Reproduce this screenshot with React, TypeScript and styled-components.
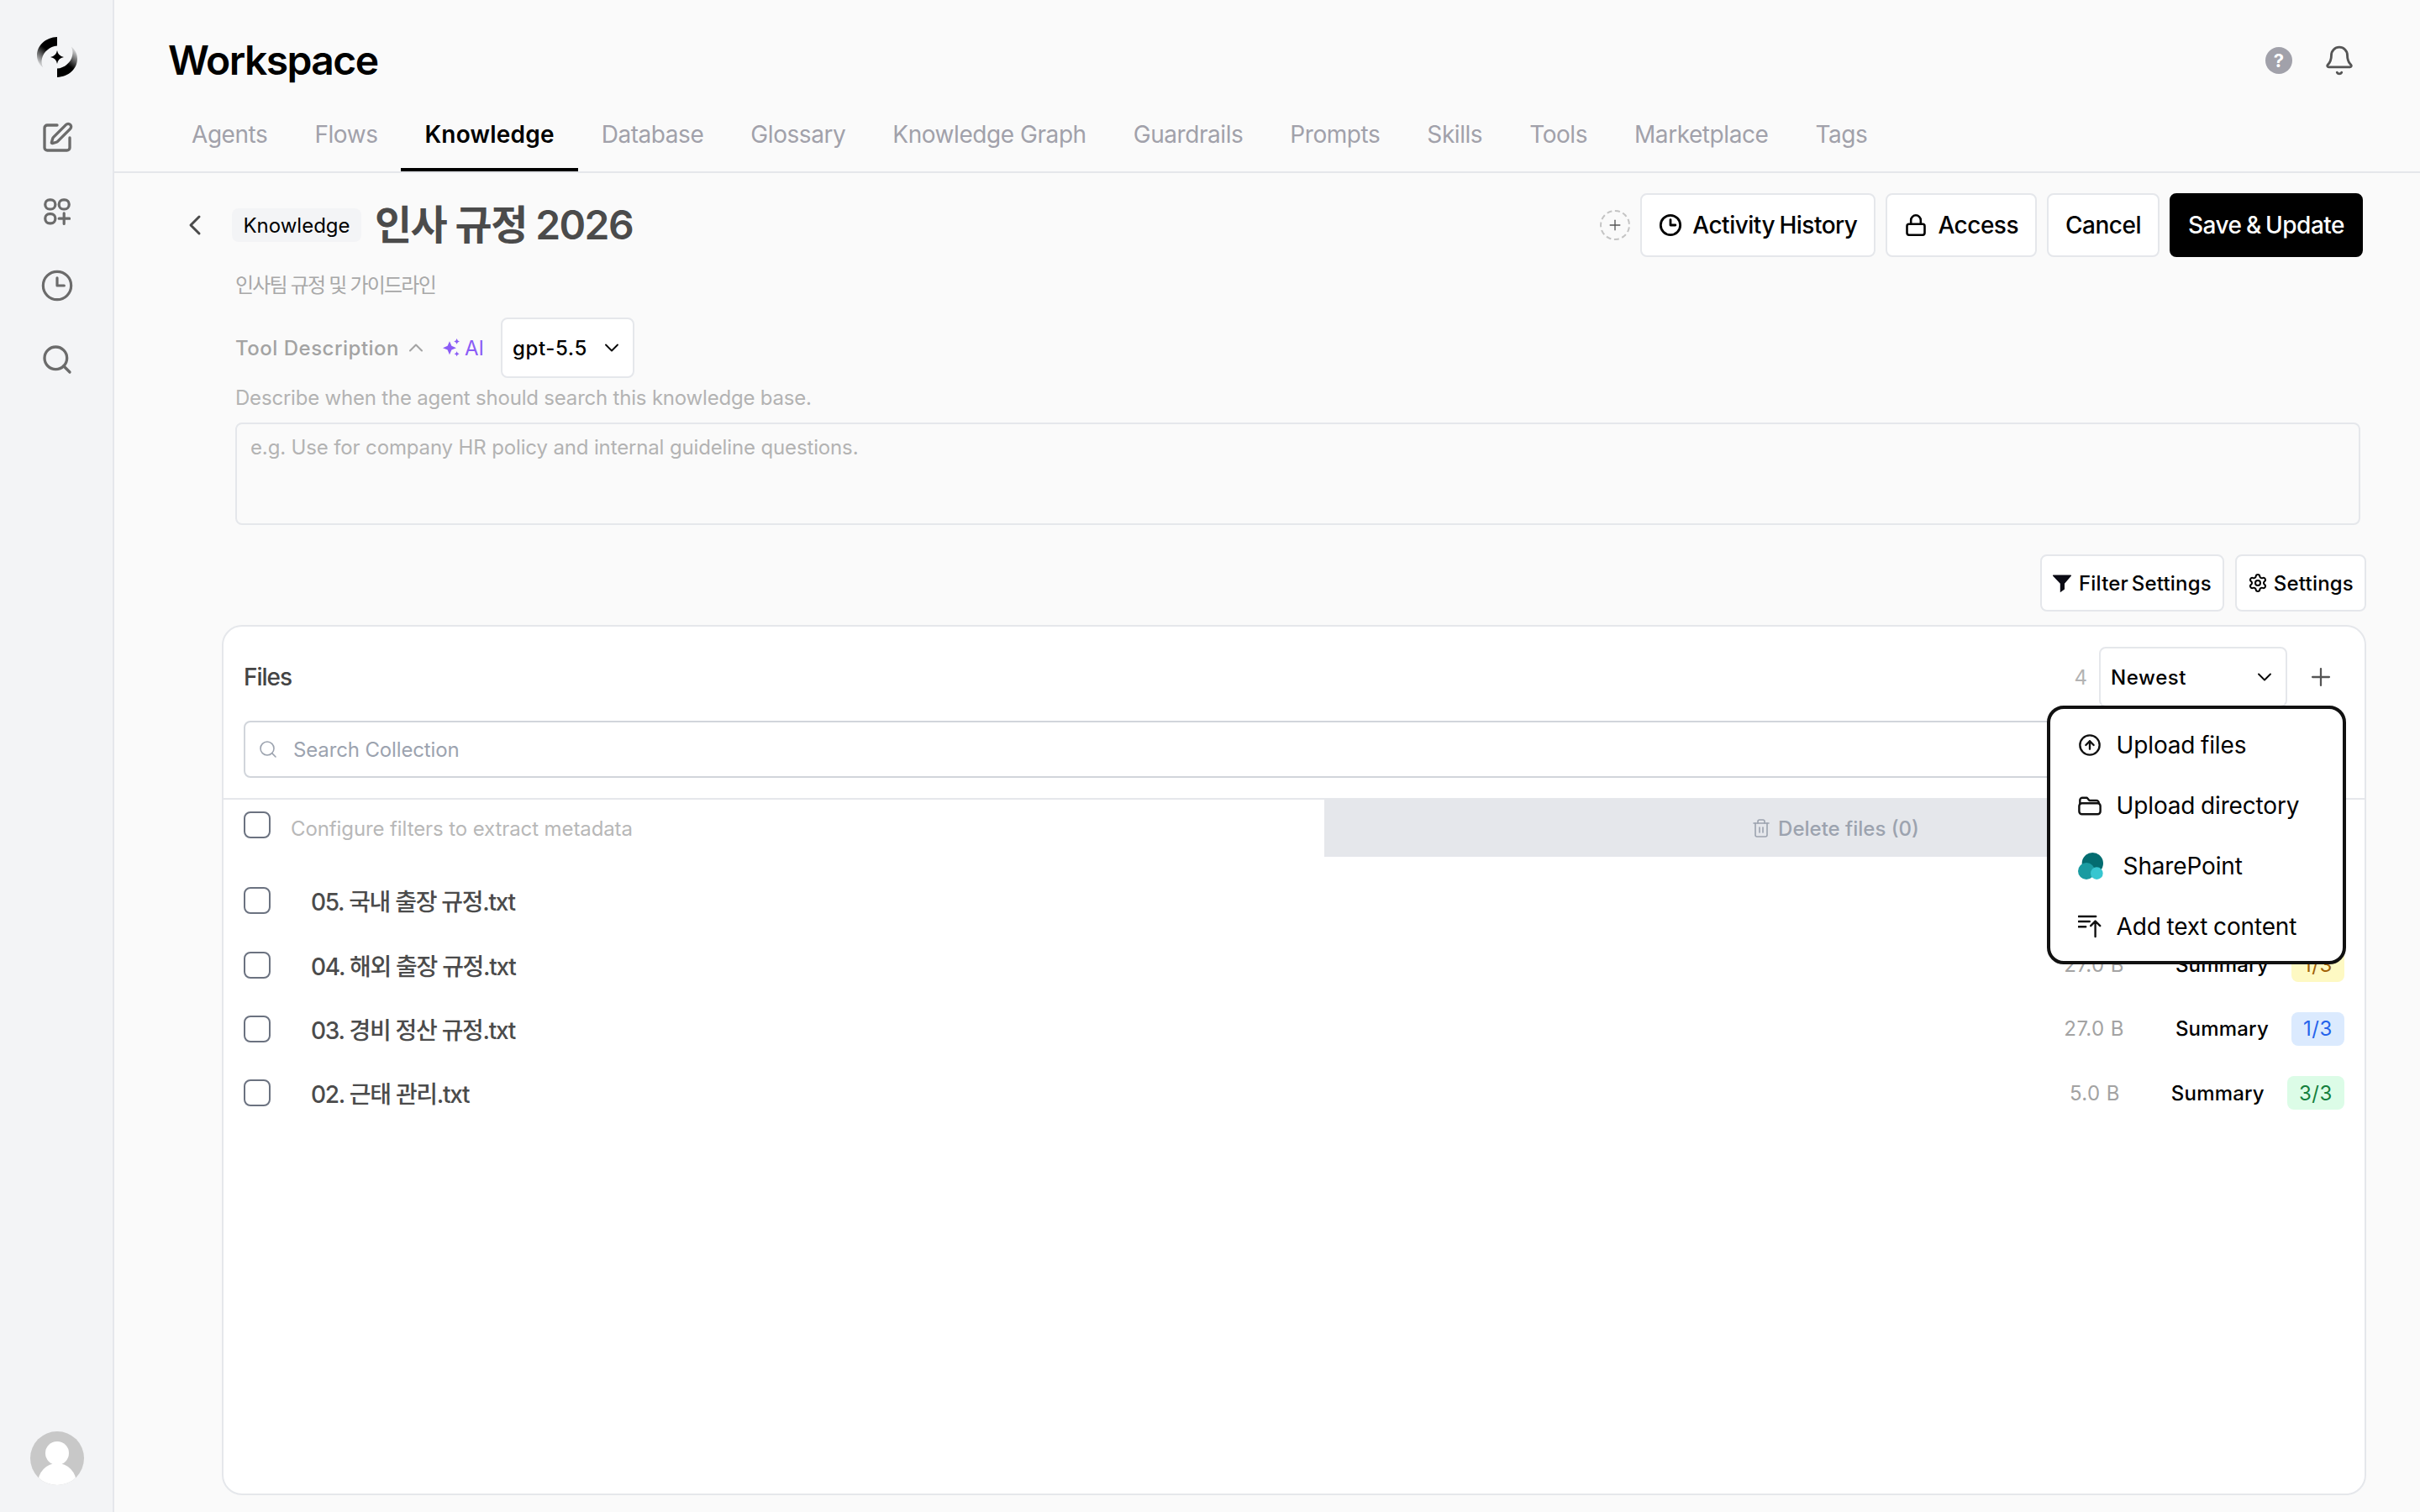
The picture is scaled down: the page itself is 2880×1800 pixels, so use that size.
import React from "react";
import styled, { createGlobalStyle } from "styled-components";
import {
  SquarePen,
  Search,
  ChevronLeft,
  ChevronUp,
  ChevronDown,
  Plus,
  Lock,
  Settings,
  CircleArrowUp,
  Trash2,
  Bell,
} from "lucide-react";

const Global = createGlobalStyle`
  html, body { margin: 0; padding: 0; background: #fafafa; overflow: hidden; }
  * { box-sizing: border-box; }
  body { font-family: Inter, "Noto Sans CJK KR", "Noto Sans", sans-serif; }
`;

const Shell = styled.div`
  zoom: 2;
  width: 1440px;
  height: 900px;
  display: flex;
  background: #fafafa;
  overflow: hidden;
  color: #000;
`;

const Rail = styled.aside`
  width: 68px;
  flex: none;
  height: 100%;
  background: #f3f4f6;
  border-right: 1px solid #e5e7eb;
  display: flex;
  flex-direction: column;
  align-items: center;
  padding: 22px 0 16px 1px;
`;

const RailLogo = styled.svg`
  width: 24px;
  height: 24px;
  margin-bottom: 26px;
`;

const RailButton = styled.div`
  width: 20px;
  height: 20px;
  margin-bottom: 24px;
  display: flex;
  align-items: center;
  justify-content: center;
  color: #6b6b6b;
`;

const Avatar = styled.svg`
  width: 32px;
  height: 32px;
  margin-top: auto;
  border-radius: 50%;
`;

const Main = styled.main`
  flex: 1;
  min-width: 0;
  display: flex;
  flex-direction: column;
`;

const TitleRow = styled.header`
  height: 58px;
  padding: 14px 38.5px 0 32px;
  display: flex;
  align-items: center;
  justify-content: space-between;
`;

const PageTitle = styled.h1`
  margin: 0;
  font-size: 24px;
  line-height: 32px;
  font-weight: 600;
  letter-spacing: -0.78px;
  color: #000;
`;

const TopIcons = styled.div`
  display: flex;
  align-items: center;
  gap: 18.5px;
  color: #555;
`;

const HelpDot = styled.span`
  width: 16px;
  height: 16px;
  border-radius: 50%;
  background: #a1a1aa;
  color: #fff;
  font-size: 11px;
  font-weight: 700;
  line-height: 16px;
  text-align: center;
`;

const Tabs = styled.nav`
  height: 45px;
  padding-left: 32px;
  display: flex;
  border-bottom: 1px solid #e5e7eb;
`;

const Tab = styled.div<{ $active?: boolean }>`
  height: 44px;
  padding: 2px 14px 0;
  display: flex;
  align-items: center;
  font-size: 14px;
  letter-spacing: ${(p) => (p.$active ? "0.1px" : "-0.22px")};
  font-weight: ${(p) => (p.$active ? 600 : 400)};
  color: ${(p) => (p.$active ? "#000" : "#a1a1aa")};
  border-bottom: 2px solid ${(p) => (p.$active ? "#000" : "transparent")};
`;

const Content = styled.section`
  flex: 1;
  min-height: 0;
  padding: 12px 32px 0 40px;
  display: flex;
  flex-direction: column;
`;

const PageHead = styled.div`
  height: 38px;
  margin-right: 2px;
  display: flex;
  align-items: center;
`;

const BackButton = styled.div`
  width: 20px;
  height: 20px;
  margin: 0 12px 0 -2px;
  display: flex;
  color: #4b4b4b;
`;

const KindPill = styled.span`
  width: 77px;
  height: 20px;
  background: #f3f4f6;
  border-radius: 4px;
  display: flex;
  align-items: center;
  justify-content: center;
  font-size: 12px;
  margin-right: 8px;
`;

const DocTitle = styled.h2`
  margin: 0;
  font-size: 24px;
  font-weight: 600;
  line-height: 32px;
  letter-spacing: -0.8px;
  color: #4b4b4b;
`;

const HeadActions = styled.div`
  margin-left: auto;
  display: flex;
  align-items: center;
  gap: 6px;
`;

const DashedAdd = styled.div`
  width: 18px;
  height: 18px;
  border-radius: 50%;
  border: 1px dashed #c4c4c4;
  display: flex;
  align-items: center;
  justify-content: center;
  color: #555;
`;

const HeadButton = styled.button<{ $primary?: boolean }>`
  height: 38px;
  padding: 0 10px;
  display: flex;
  align-items: center;
  gap: 6px;
  font-family: inherit;
  font-size: 14px;
  font-weight: 500;
  letter-spacing: -0.25px;
  word-spacing: -0.8px;
  border-radius: 4px;
  border: 1px solid ${(p) => (p.$primary ? "#000" : "#e5e7eb")};
  background: ${(p) => (p.$primary ? "#000" : "#fff")};
  color: ${(p) => (p.$primary ? "#fff" : "#000")};
`;

const FormBlock = styled.div`
  margin: 9px 3.5px 0 32px;
  display: flex;
  flex-direction: column;
`;

const Subtitle = styled.p`
  margin: 0;
  font-size: 12px;
  line-height: 16px;
  letter-spacing: -0.9px;
  color: #a8a8a8;
`;

const ToolRow = styled.div`
  margin-top: 11px;
  height: 36px;
  display: flex;
  align-items: center;
`;

const ToolLabel = styled.span`
  font-size: 12px;
  font-weight: 500;
  letter-spacing: 0.25px;
  color: #a3a3a3;
`;

const ToolChevron = styled.span`
  display: flex;
  margin: 0 9px 0 3px;
  color: #a3a3a3;
`;

const AiTag = styled.span`
  display: flex;
  align-items: center;
  gap: 2px;
  font-size: 12px;
  color: #8b5cf6;
  margin-right: 10px;
`;

const Select = styled.div<{ $w: number }>`
  width: ${(p) => p.$w}px;
  height: 36px;
  flex: none;
  padding: 0 5.5px 0 6px;
  display: flex;
  align-items: center;
  justify-content: space-between;
  background: #fff;
  border: 1px solid #e5e7eb;
  border-radius: 4px;
  font-size: 12px;
  font-weight: 500;
  letter-spacing: 0.3px;
  color: #000;
`;

const Hint = styled.p`
  margin: 4px 0 0;
  font-size: 12px;
  line-height: 16px;
  letter-spacing: -0.1px;
  color: #b3b3b3;
`;

const FakeTextarea = styled.div`
  margin-top: 6.5px;
  height: 61px;
  padding: 6px 8px;
  border: 1px solid #e5e7eb;
  border-radius: 4px;
  font-size: 12px;
  line-height: 16px;
  letter-spacing: -0.07px;
  color: #b3b3b3;
`;

const FilterBar = styled.div`
  margin-top: 17.5px;
  display: flex;
  justify-content: flex-end;
  gap: 6.5px;
`;

const SmallButton = styled.button`
  height: 34px;
  padding: 0 6.5px;
  display: flex;
  align-items: center;
  gap: 3.5px;
  font-family: inherit;
  font-size: 12px;
  font-weight: 500;
  letter-spacing: 0.1px;
  word-spacing: -1.5px;
  color: #000;
  background: #fff;
  border: 1px solid #e5e7eb;
  border-radius: 4px;
`;

const Card = styled.div`
  position: relative;
  margin: 8px 0 0 24px;
  height: 518px;
  background: #fff;
  border: 1px solid #e5e7eb;
  border-radius: 12px;
  display: flex;
  flex-direction: column;
`;

const CardHead = styled.div`
  padding: 12px 12px 0;
  display: flex;
  align-items: center;
`;

const CardTitle = styled.span`
  font-size: 14px;
  font-weight: 500;
  letter-spacing: -0.5px;
  color: #444;
`;

const Count = styled.span`
  margin-left: auto;
  margin-right: 7px;
  font-size: 12px;
  color: #b3b3b3;
`;

const AddButton = styled.span`
  width: 40px;
  margin-right: -6px;
  display: flex;
  justify-content: center;
  color: #555;
`;

const SearchField = styled.div`
  margin: 8px 12px 0;
  height: 34px;
  padding: 0 7.5px;
  display: flex;
  align-items: center;
  gap: 9px;
  border: 1px solid #d1d5db;
  border-radius: 4px;
  font-size: 12px;
  letter-spacing: -0.07px;
  color: #9ca3af;
`;

const Toolbar = styled.div`
  margin-top: 12px;
  height: 35px;
  border-top: 1px solid #e5e7eb;
  padding: 0 11px 0 12px;
  display: flex;
  align-items: center;
  justify-content: space-between;
`;

const ToolbarLeft = styled.div`
  display: flex;
  align-items: center;
  gap: 12px;
  font-size: 12px;
  letter-spacing: -0.05px;
  color: #b8b8b8;
`;

const Check = styled.span<{ $raise?: boolean }>`
  width: 16px;
  height: 16px;
  flex: none;
  border: 1px solid #6b7280;
  border-radius: 4px;
  background: #fff;
  margin-top: ${(p) => (p.$raise ? "-4px" : "0")};
`;

const DeleteButton = styled.div`
  width: 608px;
  height: 34px;
  background: #e5e7eb;
  color: #9ca3af;
  display: flex;
  align-items: center;
  justify-content: center;
  gap: 4px;
  font-size: 12px;
  font-weight: 500;
`;

const FileList = styled.div`
  margin-top: 7px;
  display: flex;
  flex-direction: column;
`;

const FileRow = styled.div`
  height: 38.2px;
  padding: 0 12px;
  display: flex;
  align-items: center;
  gap: 24px;
`;

const FileName = styled.span`
  flex: 1;
  font-size: 14px;
  font-weight: 500;
  letter-spacing: -0.65px;
  color: #4b4b4b;
`;

const FileMeta = styled.div`
  display: flex;
  align-items: center;
  font-size: 12px;
`;

const FileSize = styled.span`
  color: #a3a3a3;
  letter-spacing: 0.2px;
  margin-right: 30.5px;
`;

const FileKind = styled.span`
  font-weight: 500;
  letter-spacing: 0.1px;
  color: #000;
  margin-right: 13.5px;
`;

const tone = {
  blue: ["#dbeafe", "#2563eb"],
  green: ["#dcfce7", "#15803d"],
  yellow: ["#fef9c3", "#a16207"],
} as const;

const Badge = styled.span<{ $tone: keyof typeof tone }>`
  height: 20px;
  padding: 0 7px;
  display: flex;
  align-items: center;
  border-radius: 4px;
  letter-spacing: 0.3px;
  background: ${(p) => tone[p.$tone][0]};
  color: ${(p) => tone[p.$tone][1]};
`;

const Menu = styled.div`
  position: absolute;
  top: 47px;
  right: 11px;
  width: 178px;
  height: 154px;
  padding: 3.5px 0;
  background: #fff;
  border: 2px solid #111;
  border-radius: 10px;
  display: flex;
  flex-direction: column;
`;

const MenuItem = styled.div`
  height: 36px;
  flex: none;
  padding-left: 16.3px;
  display: flex;
  align-items: center;
  gap: 9px;
  font-size: 14px;
  letter-spacing: -0.08px;
  word-spacing: -0.5px;
  color: #000;
`;

const MenuIcon = styled.span<{ $wide?: boolean }>`
  width: ${(p) => (p.$wide ? "18px" : "14px")};
  display: flex;
  flex: none;
`;

const ClockIcon = ({ size, weight }: { size: number; weight: number }) => (
  <svg width={size} height={size} viewBox="0 0 24 24" fill="none" stroke="currentColor" strokeWidth={weight} strokeLinecap="round" strokeLinejoin="round">
    <circle cx="12" cy="12" r="10" />
    <path d="M12 6.5V12h5" />
  </svg>
);

const AppsIcon = () => (
  <svg width="16" height="16" viewBox="0 0 16 16" fill="none" stroke="currentColor" strokeWidth="1.6" strokeLinecap="round">
    <rect x="0.9" y="0.9" width="6" height="5.6" rx="2.6" />
    <rect x="9.1" y="0.9" width="6" height="5.6" rx="2.6" />
    <rect x="0.9" y="9.3" width="6" height="5.6" rx="2.6" />
    <path d="M12.1 8.9v6.3M9.1 12.1h6.2" />
  </svg>
);

const LogoMark = () => (
  <RailLogo viewBox="0 0 24 24">
    <defs>
      <linearGradient id="arcFade" x1="0.6" y1="0.15" x2="0.15" y2="1">
        <stop offset="0.3" stopColor="#000" />
        <stop offset="1" stopColor="#000" stopOpacity="0" />
      </linearGradient>
    </defs>
    <path d="M12 0C5.2 0.3 0 5 0 11c0 3 1.4 5.6 3.6 7.2C2.7 16.4 2.5 14.6 3 12.8 3.9 8.8 7.6 5.6 12 5.2Z" fill="url(#arcFade)" />
    <path d="M12 0C5.2 0.3 0 5 0 11c0 3 1.4 5.6 3.6 7.2C2.7 16.4 2.5 14.6 3 12.8 3.9 8.8 7.6 5.6 12 5.2Z" fill="url(#arcFade)" transform="rotate(180 12 12)" />
    <path d="M12 8Q12.6 11.4 16 12 12.6 12.6 12 16 11.4 12.6 8 12 11.4 11.4 12 8Z" fill="#000" />
  </RailLogo>
);

const SparkIcon = () => (
  <svg width="11" height="11" viewBox="0 0 11 11" fill="#8b5cf6">
    <path d="M4 1.6 5.2 4.4 8 5.6 5.2 6.8 4 9.6 2.8 6.8 0 5.6 2.8 4.4Z" />
    <path d="M8.3 0 8.9 1.2 10 1.7 8.9 2.2 8.3 3.4 7.7 2.2 6.6 1.7 7.7 1.2Z" />
    <path d="M8.3 7.6 8.8 8.6 9.8 9.1 8.8 9.6 8.3 10.6 7.8 9.6 6.8 9.1 7.8 8.6Z" />
  </svg>
);

const FunnelIcon = () => (
  <svg width="12" height="12" viewBox="0 0 12 12" fill="#0a0a14">
    <path d="M0.4 1.2h10.2a.4.4 0 0 1 .3.7L7 6.4v3.4L4.4 11.6V6.4L0.1 1.9a.4.4 0 0 1 .3-.7Z" />
  </svg>
);

const FolderIcon = () => (
  <svg width="15" height="13" viewBox="0 0 30 26" fill="none" stroke="#111" strokeWidth="2.6" strokeLinejoin="round">
    <path d="M2.5 12V6a3 3 0 0 1 3-3h6l3 3.5h9a3 3 0 0 1 3 3V10" />
    <rect x="1.5" y="10" width="27" height="14" rx="3.5" />
  </svg>
);

const SharePointIcon = () => (
  <svg width="15" height="17" viewBox="0 0 90 100">
    <circle cx="52" cy="40" r="38" fill="#036c70" />
    <circle cx="30" cy="68" r="30" fill="#1a9ba1" />
    <circle cx="67" cy="76" r="22" fill="#37c6d0" />
  </svg>
);

const TextUpIcon = () => (
  <svg width="14" height="14" viewBox="0 0 14 14" fill="none" stroke="#111" strokeWidth="1.2" strokeLinecap="round" strokeLinejoin="round">
    <path d="M0.4 1h10.2M0.4 4h6.5M0.4 7.1h4.2M10.3 13V4M7.6 6.6l2.7-2.8 2.8 2.8" />
  </svg>
);

const TABS = ["Agents", "Flows", "Knowledge", "Database", "Glossary", "Knowledge Graph", "Guardrails", "Prompts", "Skills", "Tools", "Marketplace", "Tags"];

const FILES: { name: string; size: string; progress: string; tone: keyof typeof tone }[] = [
  { name: "05. 국내 출장 규정.txt", size: "27.0 B", progress: "1/3", tone: "yellow" },
  { name: "04. 해외 출장 규정.txt", size: "27.0 B", progress: "1/3", tone: "yellow" },
  { name: "03. 경비 정산 규정.txt", size: "27.0 B", progress: "1/3", tone: "blue" },
  { name: "02. 근태 관리.txt", size: "5.0 B", progress: "3/3", tone: "green" },
];

export default function App() {
  return (
    <Shell>
      <Global />
      <Rail>
        <LogoMark />
        <RailButton><SquarePen size={20} strokeWidth={2} /></RailButton>
        <RailButton><AppsIcon /></RailButton>
        <RailButton><ClockIcon size={20} weight={1.9} /></RailButton>
        <RailButton><Search size={20} strokeWidth={2} /></RailButton>
        <Avatar viewBox="0 0 64 64">
          <rect width="64" height="64" fill="#c8c8c8" />
          <circle cx="32" cy="26" r="14" fill="#fff" />
          <ellipse cx="32" cy="62" rx="23" ry="24" fill="#fff" />
        </Avatar>
      </Rail>
      <Main>
        <TitleRow>
          <PageTitle>Workspace</PageTitle>
          <TopIcons>
            <HelpDot>?</HelpDot>
            <Bell size={19} strokeWidth={1.8} />
          </TopIcons>
        </TitleRow>
        <Tabs>
          {TABS.map((t) => (
            <Tab key={t} $active={t === "Knowledge"}>{t}</Tab>
          ))}
        </Tabs>
        <Content>
          <PageHead>
            <BackButton><ChevronLeft size={20} strokeWidth={1.8} /></BackButton>
            <KindPill>Knowledge</KindPill>
            <DocTitle>인사 규정 2026</DocTitle>
            <HeadActions>
              <DashedAdd><Plus size={10} strokeWidth={1.6} /></DashedAdd>
              <HeadButton><ClockIcon size={14} weight={2.4} />Activity History</HeadButton>
              <HeadButton><Lock size={14} strokeWidth={2.2} />Access</HeadButton>
              <HeadButton>Cancel</HeadButton>
              <HeadButton $primary>Save &amp; Update</HeadButton>
            </HeadActions>
          </PageHead>
          <FormBlock>
            <Subtitle>인사팀 규정 및 가이드라인</Subtitle>
            <ToolRow>
              <ToolLabel>Tool Description</ToolLabel>
              <ToolChevron><ChevronUp size={14} strokeWidth={1.8} /></ToolChevron>
              <AiTag><SparkIcon />AI</AiTag>
              <Select $w={79.5}>
                gpt-5.5
                <ChevronDown size={14} strokeWidth={1.6} />
              </Select>
            </ToolRow>
            <Hint>Describe when the agent should search this knowledge base.</Hint>
            <FakeTextarea>e.g. Use for company HR policy and internal guideline questions.</FakeTextarea>
          </FormBlock>
          <FilterBar>
            <SmallButton><FunnelIcon />Filter Settings</SmallButton>
            <SmallButton><Settings size={12} strokeWidth={2} />Settings</SmallButton>
          </FilterBar>
          <Card>
            <CardHead>
              <CardTitle>Files</CardTitle>
              <Count>4</Count>
              <Select $w={112}>
                Newest
                <ChevronDown size={14} strokeWidth={1.6} />
              </Select>
              <AddButton><Plus size={17} strokeWidth={1.6} /></AddButton>
            </CardHead>
            <SearchField>
              <Search size={12} strokeWidth={1.6} />
              Search Collection
            </SearchField>
            <Toolbar>
              <ToolbarLeft>
                <Check $raise />
                Configure filters to extract metadata
              </ToolbarLeft>
              <DeleteButton><Trash2 size={12} strokeWidth={1.6} />Delete files (0)</DeleteButton>
            </Toolbar>
            <FileList>
              {FILES.map((f) => (
                <FileRow key={f.name}>
                  <Check />
                  <FileName>{f.name}</FileName>
                  <FileMeta>
                    <FileSize>{f.size}</FileSize>
                    <FileKind>Summary</FileKind>
                    <Badge $tone={f.tone}>{f.progress}</Badge>
                  </FileMeta>
                </FileRow>
              ))}
            </FileList>
            <Menu>
              <MenuItem><MenuIcon><CircleArrowUp size={14} strokeWidth={2} color="#111" /></MenuIcon>Upload files</MenuItem>
              <MenuItem><MenuIcon><FolderIcon /></MenuIcon>Upload directory</MenuItem>
              <MenuItem><MenuIcon $wide><SharePointIcon /></MenuIcon>SharePoint</MenuItem>
              <MenuItem><MenuIcon><TextUpIcon /></MenuIcon>Add text content</MenuItem>
            </Menu>
          </Card>
        </Content>
      </Main>
    </Shell>
  );
}
